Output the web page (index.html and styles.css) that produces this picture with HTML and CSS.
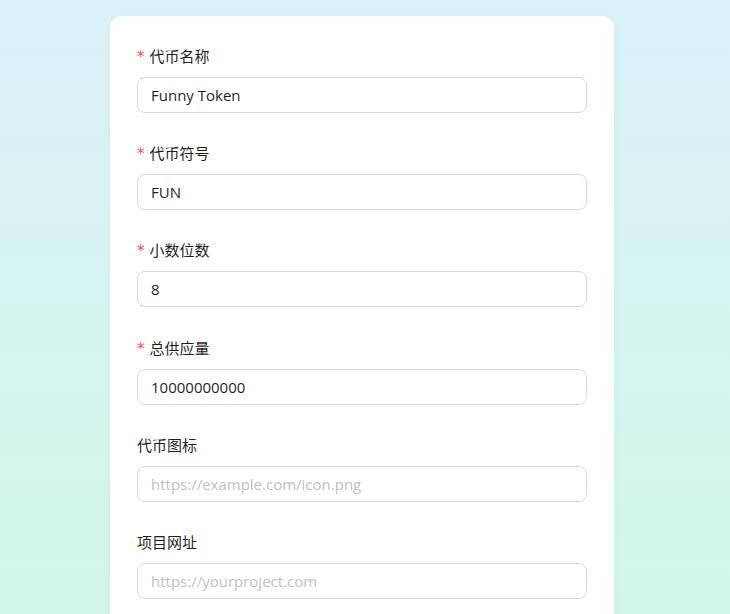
FILE: index.html
```html
<!DOCTYPE html>
<html lang="zh-CN">
<head>
<meta charset="UTF-8">
<meta name="viewport" content="width=device-width, initial-scale=1.0">
<title>创建代币</title>
<link rel="stylesheet" href="styles.css">
</head>
<body>
<div class="page">
    <form class="card" action="#" method="post">
        <div class="field">
            <label class="label required" for="name">代币名称</label>
            <input class="input" type="text" id="name" value="Funny Token">
        </div>
        <div class="field">
            <label class="label required" for="symbol">代币符号</label>
            <input class="input" type="text" id="symbol" value="FUN">
        </div>
        <div class="field">
            <label class="label required" for="decimals">小数位数</label>
            <input class="input" type="text" id="decimals" value="8">
        </div>
        <div class="field">
            <label class="label required" for="supply">总供应量</label>
            <input class="input" type="text" id="supply" value="10000000000">
        </div>
        <div class="field">
            <label class="label" for="icon">代币图标</label>
            <input class="input" type="text" id="icon" placeholder="https://example.com/icon.png">
        </div>
        <div class="field">
            <label class="label" for="site">项目网址</label>
            <input class="input" type="text" id="site" placeholder="https://yourproject.com">
        </div>
    </form>
</div>
</body>
</html>
```

FILE: styles.css
```css
html, body {
    margin: 0;
    padding: 0;
}
body {
    font-family: "Open Sans", "Noto Sans CJK SC", sans-serif;
    font-size: 15px;
    color: #1f1f1f;
    background: linear-gradient(to bottom, #d9f1f8 0, #d2f7e8 614px);
    background-attachment: fixed;
    min-height: 100vh;
}
.page {
    display: flex;
    justify-content: center;
    padding: 16px 6px 0 0;
}
.card {
    width: 504px;
    box-sizing: border-box;
    padding: 29px 27px 40px;
    background-color: #fff;
    border-radius: 12px;
    box-shadow: 0 2px 8px rgba(0, 0, 0, 0.04);
    margin: 0;
}
.field {
    display: flex;
    flex-direction: column;
    margin-bottom: 29.2px;
}
.label {
    display: block;
    height: 22px;
    line-height: 22px;
    margin-bottom: 10px;
}
.label.required::before {
    content: "*";
    color: #ff4d4f;
    margin-right: 5px;
    font-family: "DejaVu Sans", sans-serif;
    font-size: 15px;
}
.input {
    height: 36px;
    box-sizing: border-box;
    padding: 0 13px;
    border: 1px solid #d9d9d9;
    border-radius: 8px;
    font: inherit;
    color: #1f1f1f;
    background: #fff;
    outline: none;
}
.input::placeholder {
    color: #bfbfbf;
}
```
